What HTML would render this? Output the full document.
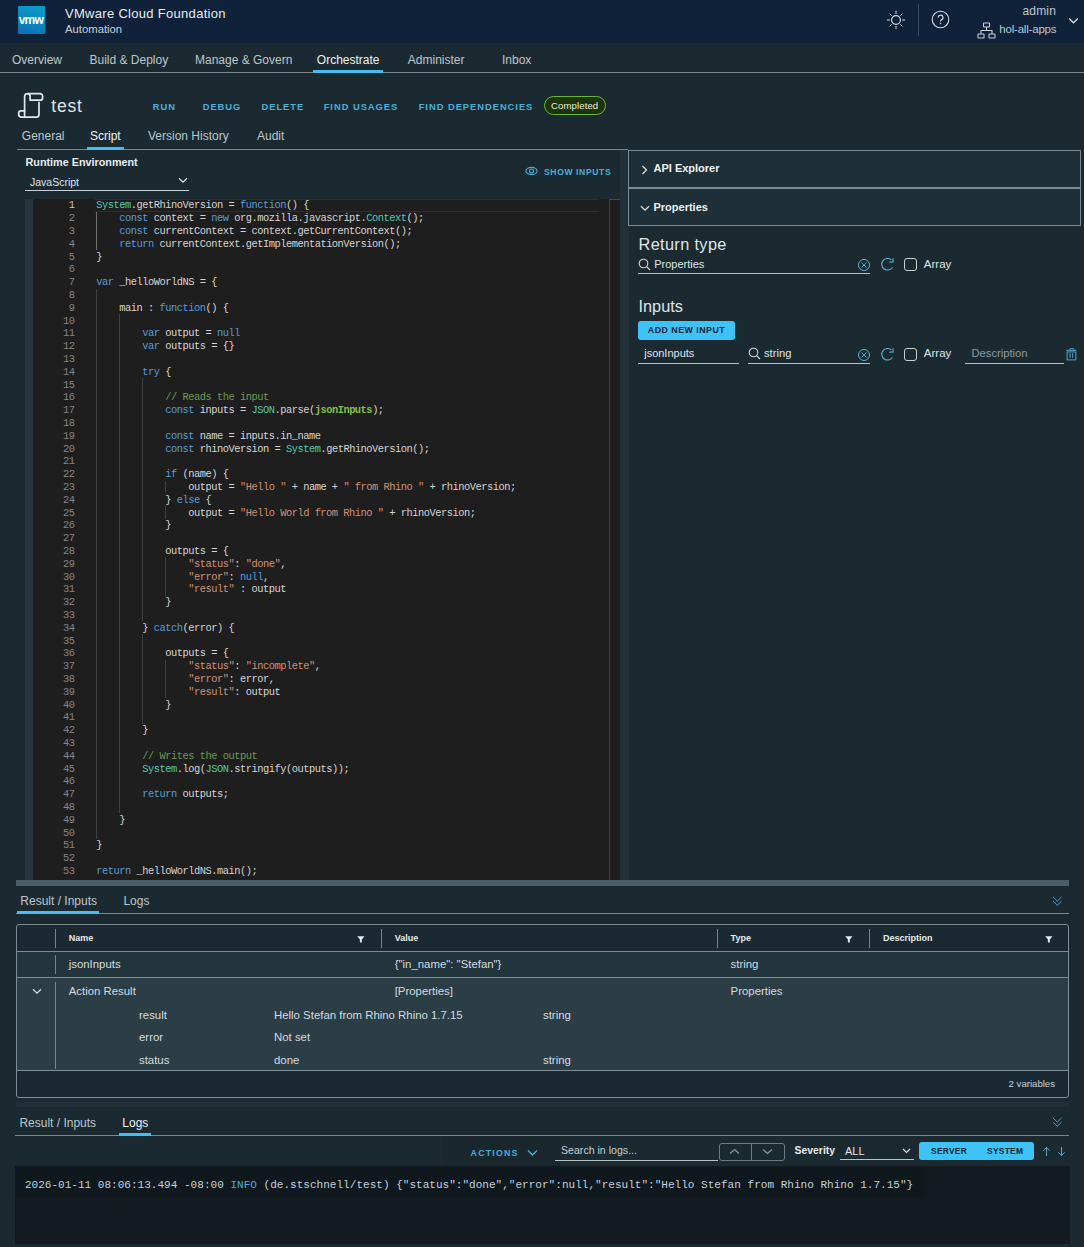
<!DOCTYPE html>
<html><head><meta charset="utf-8">
<style>
*{box-sizing:border-box;margin:0;padding:0}
html,body{width:1084px;height:1247px;overflow:hidden;background:#1b2a31;font-family:"Liberation Sans",sans-serif;color:#dbe2e6}
.a{position:absolute}
.t{position:absolute;white-space:nowrap;line-height:1}
#hdr{left:0;top:0;width:1084px;height:43px;background:#10223a}
.nav{font-size:12px;color:#bcc6cc;top:53.7px}
.lnk{font-weight:bold;font-size:9.4px;color:#49afd9;letter-spacing:0.95px}
.hline{position:absolute;height:1px;background:#7a8990}
#ed .ln{position:absolute;left:0;margin-top:0.4px;width:41.5px;text-align:right;height:12.8px;line-height:12.8px;font-family:"Liberation Mono",monospace;font-size:10.4px;color:#858585;letter-spacing:-0.5px}
#ed .ln.cur{color:#c6c6c6}
#ed .cl{position:absolute;left:63.3px;margin-top:0.4px;height:12.8px;line-height:12.8px;font-family:"Liberation Mono",monospace;font-size:10.4px;letter-spacing:-0.49px;color:#d4d4d4;white-space:pre}
#ed .g{position:absolute;width:1px;background:#404040}
#ed .g.act{background:#707070}
#ed .k{color:#569cd6}
#ed .s{color:#ce9178}
#ed .c{color:#6a9955}
#ed .ty{color:#4ec9b0}
.th{font-size:9px;font-weight:bold;color:#e6ebee;top:933.5px}
.td{font-size:11.4px;color:#d5dce0}
#ed .ji{color:#7fc241;font-weight:bold}
</style></head>
<body>
<!-- HEADER -->
<div id="hdr" class="a">
  <div class="a" style="left:18px;top:6px;width:27px;height:28px;background:linear-gradient(200deg,#0aa0cf,#0a70b2);border-radius:1px"></div>
  <div class="t" style="left:18.8px;top:14.2px;font-size:12px;font-weight:bold;color:#fff;letter-spacing:-0.85px">vmw</div>
  <div class="t" style="left:65px;top:6.7px;font-size:13px;color:#e6ebee;letter-spacing:0.3px">VMware Cloud Foundation</div>
  <div class="t" style="left:65px;top:23.7px;font-size:11.3px;color:#c7cfd4">Automation</div>
  <svg class="a" style="left:885.5px;top:9.5px" width="20" height="20" viewBox="0 0 20 20"><circle cx="10" cy="10" r="4.4" fill="none" stroke="#d5dce0" stroke-width="1.1"/><g stroke="#d5dce0" stroke-width="1" stroke-linecap="round"><path d="M10 1.3 V3.6 M10 16.4 V18.7 M1.3 10 H3.6 M16.4 10 H18.7 M3.9 3.9 L5.4 5.4 M14.6 14.6 L16.1 16.1 M3.9 16.1 L5.4 14.6 M14.6 5.4 L16.1 3.9"/></g></svg>
  <div class="a" style="left:918px;top:4px;width:1px;height:32px;background:#3b4e64"></div>
  <svg class="a" style="left:931px;top:10px" width="19" height="19" viewBox="0 0 19 19"><circle cx="9.5" cy="9.5" r="8.3" fill="none" stroke="#d5dce0" stroke-width="1.1"/><path d="M7.2 7.6 A2.4 2.4 0 1 1 10.2 9.9 C9.6 10.2 9.5 10.6 9.5 11.6" fill="none" stroke="#d5dce0" stroke-width="1.1"/><circle cx="9.5" cy="13.6" r="0.75" fill="#d5dce0"/></svg>
  <div class="t" style="left:1022.4px;top:5.3px;font-size:12px;color:#bcc7ce;letter-spacing:0.2px">admin</div>
  <div class="t" style="left:999.3px;top:23.5px;font-size:11.5px;color:#bcc7ce;letter-spacing:-0.2px">hol-all-apps</div>
  <svg class="a" style="left:977px;top:22px" width="19" height="17" viewBox="0 0 19 17"><g fill="none" stroke="#c8d0d5" stroke-width="1.1"><rect x="6.5" y="1" width="6" height="4" rx="0.6"/><rect x="1" y="12" width="6" height="4" rx="0.6"/><rect x="12" y="12" width="6" height="4" rx="0.6"/><path d="M9.5 5 V8.5 M4 12 V8.5 H15 V12"/></g></svg>
  <svg class="a" style="left:1068px;top:16.5px" width="11" height="8" viewBox="0 0 11 8"><path d="M1.2 1.5 L5.5 5.8 L9.8 1.5" fill="none" stroke="#d5dce0" stroke-width="1.3"/></svg>
</div>
<svg class="a" style="left:14px;top:88.4px" width="36" height="34" viewBox="0 0 36 34"><g fill="none" stroke="#e3e8eb" stroke-width="1.7" stroke-linejoin="round" stroke-linecap="round"><path d="M10.6 28.2 V8.7 A3 3 0 0 1 13.6 5.7 H26.1 A2.5 2.5 0 0 1 28.6 8.2 V9.9 A2.3 2.3 0 0 1 26.3 12.2 H16.1 V8.6 A2.9 2.9 0 0 0 13.6 5.7"/><path d="M25 14.3 V26.6 A2.5 2.5 0 0 1 22.5 29.1 H7.6 A2.9 2.9 0 0 1 4.7 26.2 V25 A2.2 2.2 0 0 1 6.9 22.8 H10.6"/></g></svg>
<!-- NAV -->
<div class="t nav" style="left:12px">Overview</div>
<div class="t nav" style="left:89.5px">Build &amp; Deploy</div>
<div class="t nav" style="left:195px">Manage &amp; Govern</div>
<div class="t nav" style="left:316.8px;color:#eef2f4">Orchestrate</div>
<div class="t nav" style="left:407.8px">Administer</div>
<div class="t nav" style="left:502px">Inbox</div>
<div class="a" style="left:313px;top:70px;width:70px;height:3px;background:#47bcee;z-index:2"></div>
<div class="hline" style="left:0;top:72px;width:1084px"></div>

<!-- TITLE -->
<div class="t" style="left:51.3px;top:98px;font-size:17.5px;color:#dfe5e8;letter-spacing:0.8px">test</div>
<div class="t lnk" style="left:152.8px;top:102.2px">RUN</div>
<div class="t lnk" style="left:202.7px;top:102.2px">DEBUG</div>
<div class="t lnk" style="left:261.5px;top:102.2px">DELETE</div>
<div class="t lnk" style="left:323.7px;top:102.2px">FIND USAGES</div>
<div class="t lnk" style="left:418.7px;top:102.2px">FIND DEPENDENCIES</div>
<div class="a" style="left:544px;top:96.3px;width:62px;height:18.6px;border:1.5px solid #6bb52f;border-radius:10px;background:#1c340c"></div>
<div class="t" style="left:551px;top:101.3px;font-size:9.6px;color:#e9eedb;letter-spacing:0.1px">Completed</div>

<!-- SUBTABS -->
<div class="t nav" style="left:21.8px;top:130.2px">General</div>
<div class="t nav" style="left:90px;top:130.2px;color:#eef2f4">Script</div>
<div class="t nav" style="left:148px;top:130.2px">Version History</div>
<div class="t nav" style="left:257px;top:130.2px">Audit</div>
<div class="a" style="left:87px;top:147px;width:37px;height:3px;background:#47bcee;z-index:2"></div>
<div class="hline" style="left:17px;top:149px;width:611px"></div>

<!-- RUNTIME -->
<div class="t" style="left:25.5px;top:156.5px;font-size:10.8px;font-weight:bold;color:#e8edf0">Runtime Environment</div>
<div class="t" style="left:30px;top:177px;font-size:10.5px;color:#dfe5e8">JavaScript</div>
<svg class="a" style="left:178px;top:177px" width="10" height="7" viewBox="0 0 10 7"><path d="M1 1.2 L5 5.2 L9 1.2" fill="none" stroke="#dfe5e8" stroke-width="1.3"/></svg>
<div class="a" style="left:25px;top:190px;width:164px;height:1px;background:#c9d2d7"></div>
<svg class="a" style="left:525px;top:166px" width="13" height="10" viewBox="0 0 13 10"><ellipse cx="6.5" cy="5" rx="5.6" ry="3.6" fill="none" stroke="#49afd9" stroke-width="1.1"/><circle cx="6.5" cy="5" r="2" fill="none" stroke="#49afd9" stroke-width="1.1"/></svg>
<div class="t lnk" style="left:544px;top:167.5px;font-size:8.6px;letter-spacing:0.6px">SHOW INPUTS</div>

<!-- EDITOR -->
<div class="a" style="left:25px;top:199px;width:8px;height:681px;background:#26353f"></div>
<div class="a" id="ed" style="left:33px;top:199px;width:587px;height:681px;background:#1f1e1e;overflow:hidden">
  <div class="a" style="left:62px;top:0;width:504px;height:12.8px;border-top:1px solid #2e2e2e;border-bottom:1px solid #2e2e2e"></div>
  <div class="a" style="left:576px;top:0;width:11px;height:681px;border-left:1px solid #3f3f3f;border-top:1px solid #4a4a4a"></div>
<div class="g act" style="top:12.8px;height:38.4px;left:63.3px"></div>
<div class="g" style="top:89.6px;height:550.4px;left:63.3px"></div>
<div class="g" style="top:115.2px;height:499.2px;left:86.3px"></div>
<div class="g" style="top:179.2px;height:243.2px;left:109.3px"></div>
<div class="g" style="top:435.2px;height:89.6px;left:109.3px"></div>
<div class="g" style="top:281.6px;height:12.8px;left:132.3px"></div>
<div class="g" style="top:307.2px;height:12.8px;left:132.3px"></div>
<div class="g" style="top:358.4px;height:38.4px;left:132.3px"></div>
<div class="g" style="top:460.8px;height:38.4px;left:132.3px"></div>
<div class="ln cur" style="top:0.0px">1</div>
<div class="cl" style="top:0.0px"><span class="ty">System</span>.getRhinoVersion = <span class="k">function</span>() {</div>
<div class="ln" style="top:12.8px">2</div>
<div class="cl" style="top:12.8px">    <span class="k">const</span> context = <span class="k">new</span> org.mozilla.javascript.<span class="ty">Context</span>();</div>
<div class="ln" style="top:25.6px">3</div>
<div class="cl" style="top:25.6px">    <span class="k">const</span> currentContext = context.getCurrentContext();</div>
<div class="ln" style="top:38.4px">4</div>
<div class="cl" style="top:38.4px">    <span class="k">return</span> currentContext.getImplementationVersion();</div>
<div class="ln" style="top:51.2px">5</div>
<div class="cl" style="top:51.2px">}</div>
<div class="ln" style="top:64.0px">6</div>
<div class="cl" style="top:64.0px"></div>
<div class="ln" style="top:76.8px">7</div>
<div class="cl" style="top:76.8px"><span class="k">var</span> _helloWorldNS = {</div>
<div class="ln" style="top:89.6px">8</div>
<div class="cl" style="top:89.6px"></div>
<div class="ln" style="top:102.4px">9</div>
<div class="cl" style="top:102.4px">    main : <span class="k">function</span>() {</div>
<div class="ln" style="top:115.2px">10</div>
<div class="cl" style="top:115.2px"></div>
<div class="ln" style="top:128.0px">11</div>
<div class="cl" style="top:128.0px">        <span class="k">var</span> output = <span class="k">null</span></div>
<div class="ln" style="top:140.8px">12</div>
<div class="cl" style="top:140.8px">        <span class="k">var</span> outputs = {}</div>
<div class="ln" style="top:153.6px">13</div>
<div class="cl" style="top:153.6px"></div>
<div class="ln" style="top:166.4px">14</div>
<div class="cl" style="top:166.4px">        <span class="k">try</span> {</div>
<div class="ln" style="top:179.2px">15</div>
<div class="cl" style="top:179.2px"></div>
<div class="ln" style="top:192.0px">16</div>
<div class="cl" style="top:192.0px">            <span class="c">// Reads the input</span></div>
<div class="ln" style="top:204.8px">17</div>
<div class="cl" style="top:204.8px">            <span class="k">const</span> inputs = <span class="ty">JSON</span>.parse(<span class="ji">jsonInputs</span>);</div>
<div class="ln" style="top:217.6px">18</div>
<div class="cl" style="top:217.6px"></div>
<div class="ln" style="top:230.4px">19</div>
<div class="cl" style="top:230.4px">            <span class="k">const</span> name = inputs.in_name</div>
<div class="ln" style="top:243.2px">20</div>
<div class="cl" style="top:243.2px">            <span class="k">const</span> rhinoVersion = <span class="ty">System</span>.getRhinoVersion();</div>
<div class="ln" style="top:256.0px">21</div>
<div class="cl" style="top:256.0px"></div>
<div class="ln" style="top:268.8px">22</div>
<div class="cl" style="top:268.8px">            <span class="k">if</span> (name) {</div>
<div class="ln" style="top:281.6px">23</div>
<div class="cl" style="top:281.6px">                output = <span class="s">&quot;Hello &quot;</span> + name + <span class="s">&quot; from Rhino &quot;</span> + rhinoVersion;</div>
<div class="ln" style="top:294.4px">24</div>
<div class="cl" style="top:294.4px">            } <span class="k">else</span> {</div>
<div class="ln" style="top:307.2px">25</div>
<div class="cl" style="top:307.2px">                output = <span class="s">&quot;Hello World from Rhino &quot;</span> + rhinoVersion;</div>
<div class="ln" style="top:320.0px">26</div>
<div class="cl" style="top:320.0px">            }</div>
<div class="ln" style="top:332.8px">27</div>
<div class="cl" style="top:332.8px"></div>
<div class="ln" style="top:345.6px">28</div>
<div class="cl" style="top:345.6px">            outputs = {</div>
<div class="ln" style="top:358.4px">29</div>
<div class="cl" style="top:358.4px">                <span class="s">&quot;status&quot;</span>: <span class="s">&quot;done&quot;</span>,</div>
<div class="ln" style="top:371.2px">30</div>
<div class="cl" style="top:371.2px">                <span class="s">&quot;error&quot;</span>: <span class="k">null</span>,</div>
<div class="ln" style="top:384.0px">31</div>
<div class="cl" style="top:384.0px">                <span class="s">&quot;result&quot;</span> : output</div>
<div class="ln" style="top:396.8px">32</div>
<div class="cl" style="top:396.8px">            }</div>
<div class="ln" style="top:409.6px">33</div>
<div class="cl" style="top:409.6px"></div>
<div class="ln" style="top:422.4px">34</div>
<div class="cl" style="top:422.4px">        } <span class="k">catch</span>(error) {</div>
<div class="ln" style="top:435.2px">35</div>
<div class="cl" style="top:435.2px"></div>
<div class="ln" style="top:448.0px">36</div>
<div class="cl" style="top:448.0px">            outputs = {</div>
<div class="ln" style="top:460.8px">37</div>
<div class="cl" style="top:460.8px">                <span class="s">&quot;status&quot;</span>: <span class="s">&quot;incomplete&quot;</span>,</div>
<div class="ln" style="top:473.6px">38</div>
<div class="cl" style="top:473.6px">                <span class="s">&quot;error&quot;</span>: error,</div>
<div class="ln" style="top:486.4px">39</div>
<div class="cl" style="top:486.4px">                <span class="s">&quot;result&quot;</span>: output</div>
<div class="ln" style="top:499.2px">40</div>
<div class="cl" style="top:499.2px">            }</div>
<div class="ln" style="top:512.0px">41</div>
<div class="cl" style="top:512.0px"></div>
<div class="ln" style="top:524.8px">42</div>
<div class="cl" style="top:524.8px">        }</div>
<div class="ln" style="top:537.6px">43</div>
<div class="cl" style="top:537.6px"></div>
<div class="ln" style="top:550.4px">44</div>
<div class="cl" style="top:550.4px">        <span class="c">// Writes the output</span></div>
<div class="ln" style="top:563.2px">45</div>
<div class="cl" style="top:563.2px">        <span class="ty">System</span>.log(<span class="ty">JSON</span>.stringify(outputs));</div>
<div class="ln" style="top:576.0px">46</div>
<div class="cl" style="top:576.0px"></div>
<div class="ln" style="top:588.8px">47</div>
<div class="cl" style="top:588.8px">        <span class="k">return</span> outputs;</div>
<div class="ln" style="top:601.6px">48</div>
<div class="cl" style="top:601.6px"></div>
<div class="ln" style="top:614.4px">49</div>
<div class="cl" style="top:614.4px">    }</div>
<div class="ln" style="top:627.2px">50</div>
<div class="cl" style="top:627.2px"></div>
<div class="ln" style="top:640.0px">51</div>
<div class="cl" style="top:640.0px">}</div>
<div class="ln" style="top:652.8px">52</div>
<div class="cl" style="top:652.8px"></div>
<div class="ln" style="top:665.6px">53</div>
<div class="cl" style="top:665.6px"><span class="k">return</span> _helloWorldNS.main();</div>
</div>
<div class="a" style="left:620px;top:150px;width:8.5px;height:730px;background:#21313a"></div>

<!-- RIGHT PANEL -->
<div class="a" style="left:628px;top:150px;width:453px;height:38px;border:1px solid #7a8a93;background:#1f2f37"></div>
<div class="a" style="left:628px;top:188px;width:453px;height:38px;border:1px solid #7a8a93;background:#1f2f37"></div>
<svg class="a" style="left:640.5px;top:164.5px" width="7" height="10" viewBox="0 0 7 10"><path d="M1.5 1 L5.5 5 L1.5 9" fill="none" stroke="#d8dfe3" stroke-width="1.3"/></svg>
<div class="t" style="left:653.5px;top:162.5px;font-size:11px;font-weight:bold;color:#eef2f4">API Explorer</div>
<svg class="a" style="left:640px;top:204.5px" width="10" height="7" viewBox="0 0 10 7"><path d="M1 1.2 L5 5.2 L9 1.2" fill="none" stroke="#d8dfe3" stroke-width="1.3"/></svg>
<div class="t" style="left:653.5px;top:201.5px;font-size:11px;font-weight:bold;color:#eef2f4">Properties</div>

<div class="t" style="left:638.5px;top:236.2px;font-size:16.3px;color:#dfe5e8;letter-spacing:0.37px">Return type</div>
<svg class="a" style="left:638px;top:258px" width="13" height="13" viewBox="0 0 13 13"><circle cx="5.5" cy="5.5" r="4.3" fill="none" stroke="#d0d8dc" stroke-width="1.1"/><path d="M8.6 8.6 L12 12" stroke="#d0d8dc" stroke-width="1.2"/></svg>
<div class="t" style="left:654.2px;top:259px;font-size:11px;color:#dfe5e8">Properties</div>
<div class="a" style="left:638px;top:272.5px;width:232px;height:1px;background:#b9c4ca"></div>
<svg class="a" style="left:857.3px;top:258.4px" width="14" height="14" viewBox="0 0 14 14"><circle cx="7" cy="7" r="5.5" fill="none" stroke="#52b3d6" stroke-width="1"/><path d="M4.5 4.5 L9.5 9.5 M9.5 4.5 L4.5 9.5" stroke="#52b3d6" stroke-width="0.9"/></svg>
<svg class="a" style="left:880px;top:257px" width="15" height="15" viewBox="0 0 15 15"><path d="M11.3 2.8 A5.8 5.8 0 1 0 12.4 10.5" fill="none" stroke="#52b3d6" stroke-width="1.1"/><path d="M9.2 5.3 L13.1 4.9 L12.9 1.3" fill="none" stroke="#52b3d6" stroke-width="1.1"/></svg>
<div class="a" style="left:904px;top:258px;width:13px;height:13px;border:1.2px solid #c6cfd4;border-radius:3px"></div>
<div class="t" style="left:923.8px;top:258.7px;font-size:11.5px;color:#dfe5e8">Array</div>

<div class="t" style="left:638.5px;top:298.2px;font-size:16.3px;color:#dfe5e8">Inputs</div>
<div class="a" style="left:638px;top:321px;width:97px;height:18.6px;background:#3ec3f6;border-radius:3px"></div>
<div class="t" style="left:638px;top:326px;width:97px;text-align:center;font-size:8.8px;font-weight:bold;color:#0e2235;letter-spacing:0.5px">ADD NEW INPUT</div>

<div class="t" style="left:644.2px;top:348px;font-size:11px;color:#dfe5e8">jsonInputs</div>
<div class="a" style="left:638px;top:362.5px;width:101px;height:1px;background:#b9c4ca"></div>
<svg class="a" style="left:748px;top:347px" width="13" height="13" viewBox="0 0 13 13"><circle cx="5.5" cy="5.5" r="4.3" fill="none" stroke="#d0d8dc" stroke-width="1.1"/><path d="M8.6 8.6 L12 12" stroke="#d0d8dc" stroke-width="1.2"/></svg>
<div class="t" style="left:764px;top:348px;font-size:11.2px;color:#dfe5e8">string</div>
<div class="a" style="left:748px;top:362.5px;width:122px;height:1px;background:#b9c4ca"></div>
<svg class="a" style="left:857.3px;top:347.6px" width="14" height="14" viewBox="0 0 14 14"><circle cx="7" cy="7" r="5.5" fill="none" stroke="#52b3d6" stroke-width="1"/><path d="M4.5 4.5 L9.5 9.5 M9.5 4.5 L4.5 9.5" stroke="#52b3d6" stroke-width="0.9"/></svg>
<svg class="a" style="left:880px;top:346.5px" width="15" height="15" viewBox="0 0 15 15"><path d="M11.3 2.8 A5.8 5.8 0 1 0 12.4 10.5" fill="none" stroke="#52b3d6" stroke-width="1.1"/><path d="M9.2 5.3 L13.1 4.9 L12.9 1.3" fill="none" stroke="#52b3d6" stroke-width="1.1"/></svg>
<div class="a" style="left:904px;top:348px;width:13px;height:13px;border:1.2px solid #c6cfd4;border-radius:3px"></div>
<div class="t" style="left:923.8px;top:348.2px;font-size:11.5px;color:#dfe5e8">Array</div>
<div class="t" style="left:971.5px;top:348px;font-size:11.2px;color:#8c9ba5">Description</div>
<div class="a" style="left:965px;top:362.5px;width:99px;height:1px;background:#b9c4ca"></div>
<svg class="a" style="left:1066px;top:347px" width="11" height="14" viewBox="0 0 11 14"><g fill="none" stroke="#4fa3cb" stroke-width="1"><path d="M0.2 3.3 H10.3 M4 3.3 V1.9 Q5.85 0.8 7.7 1.9 V3.3 M4.1 6.2 V10.9 M6.6 6.2 V10.9"/><rect x="1.1" y="4.9" width="8.7" height="8"/></g></svg>

<!-- SPLITTER -->
<div class="a" style="left:16px;top:880px;width:1053px;height:6px;background:#4b5d69"></div>

<!-- RESULT TABS -->
<div class="t nav" style="left:20.3px;top:895px">Result / Inputs</div>
<div class="t nav" style="left:123.4px;top:895px">Logs</div>
<div class="a" style="left:16.6px;top:911px;width:82.6px;height:3px;background:#47bcee;z-index:2"></div>
<div class="hline" style="left:16px;top:913px;width:1053px"></div>
<svg class="a" style="left:1051.5px;top:895.5px" width="11" height="11" viewBox="0 0 11 11"><path d="M1 1 L5.25 5.1 L9.5 1 M1 5.2 L5.25 9.3 L9.5 5.2" fill="none" stroke="#4aa3cc" stroke-width="0.95"/></svg>

<!-- TABLE -->
<div class="a" style="left:16px;top:924px;width:1053px;height:174px;border:1px solid #7d8d96;border-radius:3px;background:#1b2a32;overflow:hidden">
  <div class="a" style="left:0;top:26px;width:1051px;height:26px;background:#22343c;border-top:1px solid #7d8d96"></div>
  <div class="a" style="left:0;top:52px;width:1051px;height:94px;background:#2b3d45;border-top:1px solid #7d8d96;border-bottom:1px solid #7d8d96"></div>
</div>
<div class="a" style="left:55px;top:929px;width:1px;height:19px;background:#75848c"></div>
<div class="a" style="left:381px;top:929px;width:1px;height:19px;background:#75848c"></div>
<div class="a" style="left:717px;top:929px;width:1px;height:19px;background:#75848c"></div>
<div class="a" style="left:869px;top:929px;width:1px;height:19px;background:#75848c"></div>
<div class="a" style="left:55px;top:955px;width:1px;height:19px;background:#75848c"></div>
<div class="a" style="left:55px;top:982px;width:1px;height:87px;background:#75848c"></div>
<div class="t th" style="left:68.7px">Name</div>
<div class="t th" style="left:394.7px">Value</div>
<div class="t th" style="left:730.6px">Type</div>
<div class="t th" style="left:883px">Description</div>
<svg class="a flt" style="left:357px;top:935.5px" width="8" height="7" viewBox="0 0 8 7"><path d="M0.2 0.3 H7.5 L4.8 3.4 V6.6 H2.9 V3.4 Z" fill="#e6ebee"/></svg>
<svg class="a flt" style="left:845px;top:935.5px" width="8" height="7" viewBox="0 0 8 7"><path d="M0.2 0.3 H7.5 L4.8 3.4 V6.6 H2.9 V3.4 Z" fill="#e6ebee"/></svg>
<svg class="a flt" style="left:1045px;top:935.5px" width="8" height="7" viewBox="0 0 8 7"><path d="M0.2 0.3 H7.5 L4.8 3.4 V6.6 H2.9 V3.4 Z" fill="#e6ebee"/></svg>
<div class="t td" style="left:68.7px;top:959.2px">jsonInputs</div>
<div class="t td" style="left:394.7px;top:959.2px">{"in_name": "Stefan"}</div>
<div class="t td" style="left:730.6px;top:959.2px">string</div>
<svg class="a" style="left:32px;top:988.3px" width="10" height="7" viewBox="0 0 10 7"><path d="M1 1.2 L5 5.2 L9 1.2" fill="none" stroke="#d8dfe3" stroke-width="1.3"/></svg>
<div class="t td" style="left:68.7px;top:986.2px">Action Result</div>
<div class="t td" style="left:394.7px;top:986.2px">[Properties]</div>
<div class="t td" style="left:730.6px;top:986.2px">Properties</div>
<div class="t td" style="left:139px;top:1009.7px">result</div>
<div class="t td" style="left:274px;top:1009.7px">Hello Stefan from Rhino Rhino 1.7.15</div>
<div class="t td" style="left:543px;top:1009.7px">string</div>
<div class="t td" style="left:139px;top:1032.4px">error</div>
<div class="t td" style="left:274px;top:1032.4px">Not set</div>
<div class="t td" style="left:139px;top:1054.5px">status</div>
<div class="t td" style="left:274px;top:1054.5px">done</div>
<div class="t td" style="left:543px;top:1054.5px">string</div>
<div class="t" style="left:1008.6px;top:1079px;font-size:9.6px;color:#c8d0d5">2 variables</div>

<!-- SPLITTER 2 -->
<div class="a" style="left:16px;top:1102px;width:1053px;height:5px;background:#222f37"></div>

<!-- LOG TABS -->
<div class="t nav" style="left:19.4px;top:1116.8px">Result / Inputs</div>
<div class="t nav" style="left:122.3px;top:1116.8px;color:#eef2f4">Logs</div>
<div class="a" style="left:119px;top:1133px;width:32px;height:3px;background:#47bcee;z-index:2"></div>
<div class="hline" style="left:15px;top:1135px;width:1054px"></div>
<svg class="a" style="left:1051.5px;top:1116.5px" width="11" height="11" viewBox="0 0 11 11"><path d="M1 1 L5.25 5.1 L9.5 1 M1 5.2 L5.25 9.3 L9.5 5.2" fill="none" stroke="#4aa3cc" stroke-width="0.95"/></svg>

<!-- LOG TOOLBAR -->
<div class="a" style="left:443px;top:1136px;width:117px;height:30px;background:#1a272d"></div>
<div class="t lnk" style="left:470.6px;top:1149px;font-size:8.8px;letter-spacing:1.2px">ACTIONS</div>
<svg class="a" style="left:527px;top:1149px" width="11" height="8" viewBox="0 0 11 8"><path d="M1 1.5 L5.5 6 L10 1.5" fill="none" stroke="#49afd9" stroke-width="1.3"/></svg>
<div class="t" style="left:561px;top:1145px;font-size:10.6px;color:#c6cfd4">Search in logs...</div>
<div class="a" style="left:554.5px;top:1159.5px;width:163px;height:1px;background:#b9c4ca"></div>
<div class="a" style="left:718.5px;top:1142.5px;width:66px;height:18.5px;border:1px solid #6d7c84;border-radius:3px"></div>
<div class="a" style="left:751px;top:1143px;width:1px;height:17.5px;background:#6d7c84"></div>
<svg class="a" style="left:729px;top:1148px" width="11" height="7" viewBox="0 0 11 7"><path d="M1 5.5 L5.5 1.5 L10 5.5" fill="none" stroke="#8c9ba5" stroke-width="1.1"/></svg>
<svg class="a" style="left:762px;top:1148px" width="11" height="7" viewBox="0 0 11 7"><path d="M1 1.5 L5.5 5.5 L10 1.5" fill="none" stroke="#8c9ba5" stroke-width="1.1"/></svg>
<div class="t" style="left:794.6px;top:1146px;font-size:10.4px;font-weight:bold;color:#e6ebee">Severity</div>
<div class="t" style="left:845px;top:1146px;font-size:11px;color:#dfe5e8">ALL</div>
<svg class="a" style="left:902px;top:1148px" width="9" height="6" viewBox="0 0 9 6"><path d="M1 1 L4.5 4.5 L8 1" fill="none" stroke="#dfe5e8" stroke-width="1.2"/></svg>
<div class="a" style="left:840.3px;top:1159.2px;width:73.5px;height:1px;background:#b9c4ca"></div>
<div class="a" style="left:919.4px;top:1142px;width:114.4px;height:18.3px;background:#3ec3f6;border-radius:3px"></div>
<div class="t" style="left:931px;top:1147.3px;font-size:8.4px;font-weight:bold;color:#0e2235;letter-spacing:0.3px">SERVER</div>
<div class="t" style="left:987px;top:1147.3px;font-size:8.4px;font-weight:bold;color:#0e2235;letter-spacing:0.3px">SYSTEM</div>
<svg class="a" style="left:1042px;top:1146px" width="9" height="11" viewBox="0 0 9 11"><path d="M4.5 10 V1.5 M1.2 4.7 L4.5 1.4 L7.8 4.7" fill="none" stroke="#56a9d0" stroke-width="1"/></svg>
<svg class="a" style="left:1057px;top:1146px" width="9" height="11" viewBox="0 0 9 11"><path d="M4.5 1 V9.5 M1.2 6.3 L4.5 9.6 L7.8 6.3" fill="none" stroke="#56a9d0" stroke-width="1"/></svg>

<!-- LOG AREA -->
<div class="a" style="left:15px;top:1166px;width:1055px;height:78px;background:#131b20"></div>
<div class="a" style="left:15px;top:1167px;width:909px;height:30px;background:#0f181d"></div>
<div class="t" style="left:24.9px;top:1180px;font-family:'Liberation Mono',monospace;font-size:11.05px;color:#c2d1da;white-space:pre">2026-01-11 08:06:13.494 -08:00 <span style="color:#49afd9">INFO</span> (de.stschnell/test) {"status":"done","error":null,"result":"Hello Stefan from Rhino Rhino 1.7.15"}</div>

</body></html>
